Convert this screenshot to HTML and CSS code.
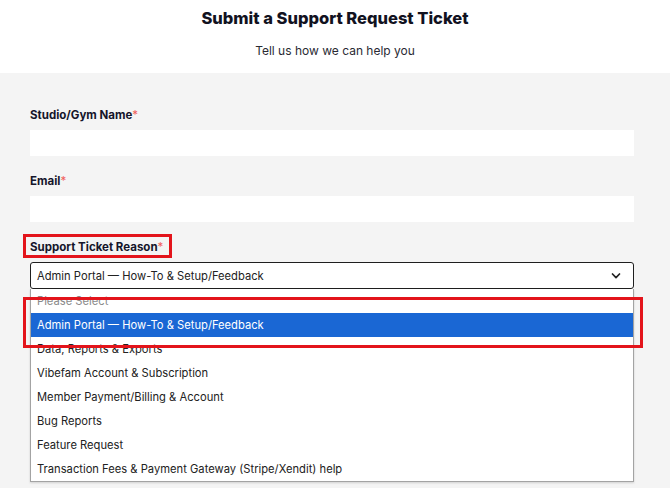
FILE: index.html
```html
<!DOCTYPE html>
<html lang="en">
<head>
<meta charset="utf-8">
<title>Submit a Support Request Ticket</title>
<link rel="stylesheet" href="styles.css">
</head>
<body>
<header class="intro">
  <h1 class="intro-title">Submit a Support Request Ticket</h1>
  <p class="intro-sub">Tell us how we can help you</p>
</header>
<main class="form-area">
  <div class="field">
    <label class="field-label">Studio/Gym Name<span class="req">*</span></label>
    <div class="text-input"></div>
  </div>
  <div class="field">
    <label class="field-label">Email<span class="req">*</span></label>
    <div class="text-input"></div>
  </div>
  <div class="field field-last">
    <label class="field-label"><span class="marked">Support Ticket Reason<span class="req">*</span></span></label>
    <div class="select-box">
      <span class="select-value">Admin Portal — How-To &amp; Setup/Feedback</span>
      <svg class="chevron" width="10" height="6" viewBox="0 0 10 6"><path d="M1.5 1 L5 4.6 L8.5 1" fill="none" stroke="#222" stroke-width="1.7" stroke-linecap="round" stroke-linejoin="round"/></svg>
    </div>
    <ul class="option-list">
      <li class="option placeholder">Please Select</li>
      <li class="option selected">Admin Portal — How-To &amp; Setup/Feedback</li>
      <li class="option">Data, Reports &amp; Exports</li>
      <li class="option">Vibefam Account &amp; Subscription</li>
      <li class="option">Member Payment/Billing &amp; Account</li>
      <li class="option">Bug Reports</li>
      <li class="option">Feature Request</li>
      <li class="option">Transaction Fees &amp; Payment Gateway (Stripe/Xendit) help</li>
      <li class="mark-box"></li>
    </ul>
  </div>
</main>
</body>
</html>
```
FILE: styles.css
```css
html, body {
  margin: 0;
  padding: 0;
  background: #ffffff;
  font-family: "Inter", "Liberation Sans", sans-serif;
  color: #1b1b28;
}

.intro {
  height: 73px;
  text-align: center;
  background: #ffffff;
  display: flex;
  flex-direction: column;
  align-items: center;
}

.intro-title {
  margin: 7px 0 0;
  font-size: 16.5px;
  line-height: 22px;
  font-weight: 800;
  color: #12121f;
  letter-spacing: 0;
}

.intro-sub {
  margin: 14px 0 0;
  font-size: 12px;
  line-height: 16px;
  color: #2a2a33;
}

.form-area {
  background: #f4f4f4;
  padding: 33px 36px 6px 30px;
}

.field {
  display: flex;
  flex-direction: column;
  margin-bottom: 16px;
  position: relative;
}

.field-last {
  margin-bottom: 0;
}

.field-label {
  font-size: 11.5px;
  line-height: 18px;
  font-weight: 700;
  color: #15152a;
  margin-bottom: 6px;
}

.req {
  color: #f0605a;
  font-weight: 400;
}

.marked {
  position: relative;
  display: inline-block;
}

.marked::after {
  content: "";
  position: absolute;
  left: -7px;
  top: -4px;
  width: 149px;
  height: 24px;
  border: 3px solid #e3141b;
  box-sizing: border-box;
}

.text-input {
  height: 26px;
  background: #ffffff;
}

.select-box {
  height: 27px;
  box-sizing: border-box;
  border: 1px solid #1f1f1f;
  border-radius: 3px;
  background: #ffffff;
  display: flex;
  align-items: center;
  justify-content: space-between;
  padding: 0 12px 0 6px;
  font-size: 11.2px;
  color: #222;
}

.chevron {
  display: block;
}

.option-list {
  list-style: none;
  margin: 0;
  padding: 0;
  background: #ffffff;
  border: 1px solid #a3a3a3;
  border-top: none;
  position: relative;
  box-shadow: 0 1px 2px rgba(0,0,0,0.15);
}

.option {
  height: 24px;
  line-height: 24px;
  padding-left: 6px;
  font-size: 11.2px;
  color: #222;
  white-space: nowrap;
}

.option.placeholder {
  color: #8a8a8a;
}

.option.selected {
  background: #1a67d4;
  color: #ffffff;
}

.mark-box {
  position: absolute;
  left: -8px;
  top: 8px;
  width: 620px;
  height: 51px;
  border: 3px solid #e3141b;
  box-sizing: border-box;
}
```
